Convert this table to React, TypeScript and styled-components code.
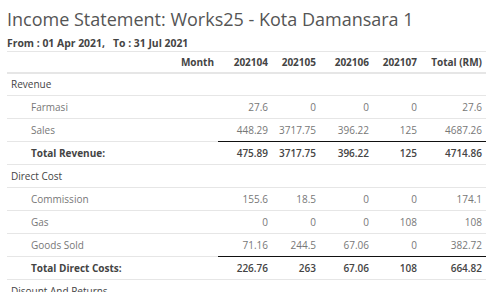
import { Fragment } from 'react';
import styled, { createGlobalStyle } from 'styled-components';

const GlobalStyle = createGlobalStyle`
  body {
    margin: 0;
    background: #ffffff;
    font-family: "Open Sans", "Noto Sans", sans-serif;
    color: #555;
  }
`

const Page = styled.div`
  padding: 6px 14px 0 7px;
  width: 479px;
`
const Title = styled.h1`
  margin: 0;
  font-size: 18px;
  font-weight: 400;
  color: #555;
  line-height: 27px;
  white-space: nowrap;
`
const Period = styled.div`
  font-size: 10.4px;
  font-weight: 700;
  color: #444;
  margin-top: 3px;
  line-height: 14px;
  white-space: pre;
`
const Table = styled.table`
  margin-top: 1px;
  width: 479px;
  border-collapse: collapse;
  table-layout: fixed;
  font-size: 10px;
`
const HeadCell = styled.th<{ $w: number }>`
  box-sizing: border-box;
  width: ${p => p.$w}px;
  text-align: right;
  font-weight: 700;
  color: #444;
  padding: 0 4px;
  height: 21px;
  border-top: 1px solid #e6e6e6;
  border-bottom: 2px solid #e6e6e6;
  white-space: nowrap;
`
const Row = styled.tr`
  height: 23px;
  border-bottom: 1px solid #e6e6e6;
`
const Label = styled.td<{ $indent?: boolean; $kind: 'group' | 'item' | 'total' }>`
  padding: 0 4px 0 ${p => (p.$indent ? 24 : 4)}px;
  color: ${p => (p.$kind === 'item' ? '#777' : '#444')};
  font-weight: ${p => (p.$kind === 'total' ? 700 : 400)};
  white-space: nowrap;
`
const Num = styled.td<{ $total?: boolean }>`
  text-align: right;
  padding: 0 4px;
  color: ${p => (p.$total ? '#444' : '#777')};
  font-weight: ${p => (p.$total ? 600 : 400)};
  border-top: ${p => (p.$total ? '1px solid #111' : 'none')};
`

type Line = { label: string; values: string[] }
type Section = { name: string; items: Line[]; total?: Line }

const sections: Section[] = [
  {
    name: 'Revenue',
    items: [
      { label: 'Farmasi', values: ['27.6', '0', '0', '0', '27.6'] },
      { label: 'Sales', values: ['448.29', '3717.75', '396.22', '125', '4687.26'] },
    ],
    total: { label: 'Total Revenue:', values: ['475.89', '3717.75', '396.22', '125', '4714.86'] },
  },
  {
    name: 'Direct Cost',
    items: [
      { label: 'Commission', values: ['155.6', '18.5', '0', '0', '174.1'] },
      { label: 'Gas', values: ['0', '0', '0', '108', '108'] },
      { label: 'Goods Sold', values: ['71.16', '244.5', '67.06', '0', '382.72'] },
    ],
    total: { label: 'Total Direct Costs:', values: ['226.76', '263', '67.06', '108', '664.82'] },
  },
  { name: 'Disount And Returns', items: [] },
]

const columns = [
  { title: 'Month', w: 211 },
  { title: '202104', w: 54 },
  { title: '202105', w: 48 },
  { title: '202106', w: 53 },
  { title: '202107', w: 48 },
  { title: 'Total (RM)', w: 65 },
]

export default function App() {
  return (
    <Page>
      <GlobalStyle />
      <Title>Income Statement: Works25 - Kota Damansara 1</Title>
      <Period>{'From : 01 Apr 2021,   To : 31 Jul 2021'}</Period>
      <Table>
        <thead>
          <tr>
            {columns.map(c => (
              <HeadCell key={c.title} $w={c.w}>{c.title}</HeadCell>
            ))}
          </tr>
        </thead>
        <tbody>
          {sections.map(s => (
            <Fragment key={s.name}>
              <Row>
                <Label $kind="group" colSpan={6}>{s.name}</Label>
              </Row>
              {s.items.map(it => (
                <Row key={it.label}>
                  <Label $kind="item" $indent>{it.label}</Label>
                  {it.values.map((v, i) => <Num key={i}>{v}</Num>)}
                </Row>
              ))}
              {s.total && (
                <Row>
                  <Label $kind="total" $indent>{s.total.label}</Label>
                  {s.total.values.map((v, i) => <Num key={i} $total>{v}</Num>)}
                </Row>
              )}
            </Fragment>
          ))}
        </tbody>
      </Table>
    </Page>
  )
}
